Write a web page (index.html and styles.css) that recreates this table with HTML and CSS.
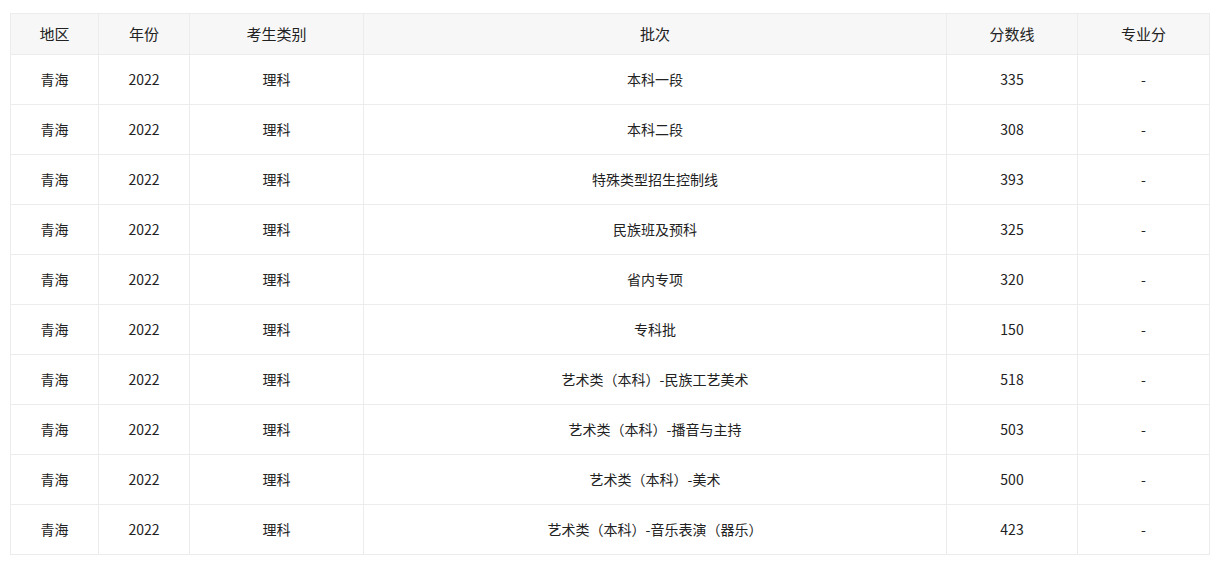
FILE: index.html
```html
<!DOCTYPE html>
<html lang="zh">
<head>
<meta charset="utf-8">
<link rel="stylesheet" href="styles.css">
</head>
<body>
<div class="wrap">
<table class="score-table">
<colgroup>
<col class="c1"><col class="c2"><col class="c3"><col class="c4"><col class="c5"><col class="c6">
</colgroup>
<thead>
<tr><th>地区</th><th>年份</th><th>考生类别</th><th>批次</th><th>分数线</th><th>专业分</th></tr>
</thead>
<tbody>
<tr><td>青海</td><td>2022</td><td>理科</td><td>本科一段</td><td>335</td><td>-</td></tr>
<tr><td>青海</td><td>2022</td><td>理科</td><td>本科二段</td><td>308</td><td>-</td></tr>
<tr><td>青海</td><td>2022</td><td>理科</td><td>特殊类型招生控制线</td><td>393</td><td>-</td></tr>
<tr><td>青海</td><td>2022</td><td>理科</td><td>民族班及预科</td><td>325</td><td>-</td></tr>
<tr><td>青海</td><td>2022</td><td>理科</td><td>省内专项</td><td>320</td><td>-</td></tr>
<tr><td>青海</td><td>2022</td><td>理科</td><td>专科批</td><td>150</td><td>-</td></tr>
<tr><td>青海</td><td>2022</td><td>理科</td><td>艺术类（本科）-民族工艺美术</td><td>518</td><td>-</td></tr>
<tr><td>青海</td><td>2022</td><td>理科</td><td>艺术类（本科）-播音与主持</td><td>503</td><td>-</td></tr>
<tr><td>青海</td><td>2022</td><td>理科</td><td>艺术类（本科）-美术</td><td>500</td><td>-</td></tr>
<tr><td>青海</td><td>2022</td><td>理科</td><td>艺术类（本科）-音乐表演（器乐）</td><td>423</td><td>-</td></tr>
</tbody>
</table>
</div>
</body>
</html>
```
FILE: styles.css
```css
html, body {
  margin: 0;
  padding: 0;
  background: #fff;
}
body {
  font-family: "Noto Sans CJK SC", "Noto Sans", sans-serif;
  color: #222;
}
.wrap {
  padding: 13px 12px 0 10px;
}
.score-table {
  width: 1199px;
  border-collapse: collapse;
  table-layout: fixed;
}
.c1 { width: 88px; }
.c2 { width: 91px; }
.c3 { width: 174px; }
.c4 { width: 583px; }
.c5 { width: 131px; }
.c6 { width: 132px; }
.score-table th,
.score-table td {
  border: 1px solid #ececec;
  text-align: center;
  padding: 0 0 2px;
  white-space: nowrap;
}
.score-table th {
  height: 38px;
  background: #f7f7f7;
  font-weight: normal;
  font-size: 15px;
  color: #222;
}
.score-table td {
  height: 47px;
  font-size: 14px;
}
```
